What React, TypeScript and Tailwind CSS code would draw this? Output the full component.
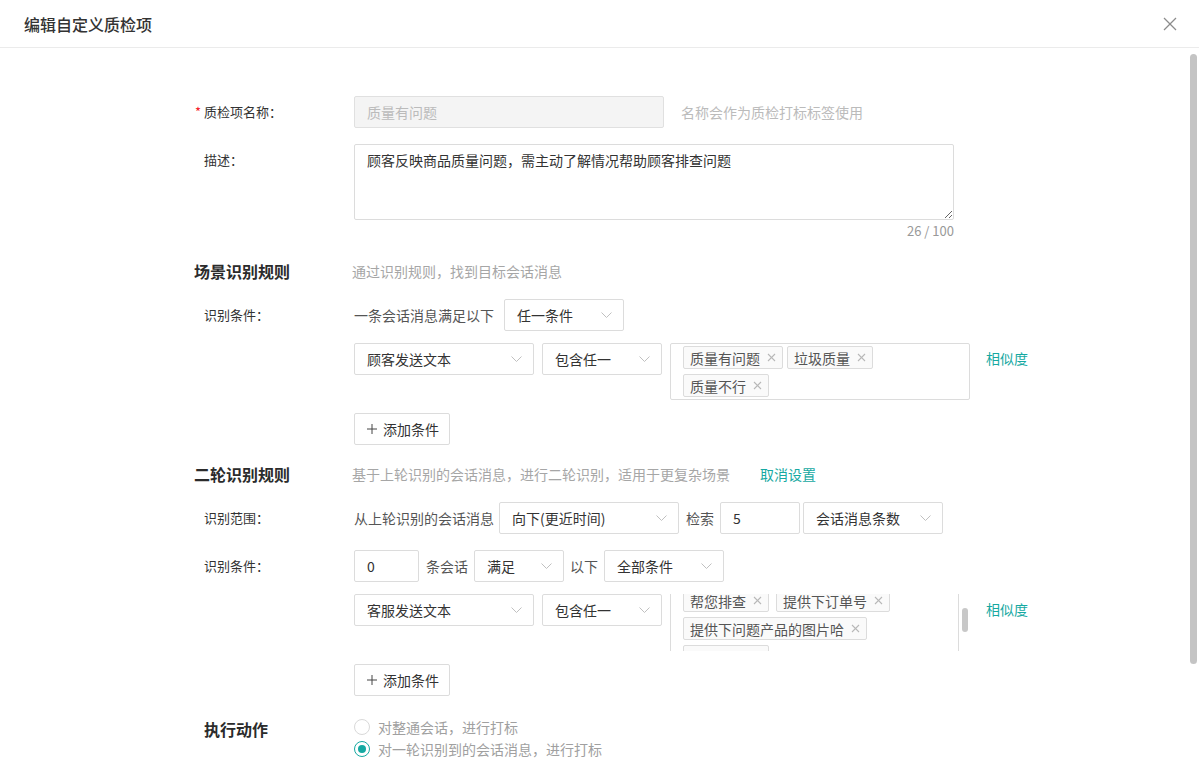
import React from "react"

const TEAL = "text-[#16a9a2]"

function Chevron() {
  return (
    <svg width="11" height="6" viewBox="0 0 11 6" fill="none" className="shrink-0">
      <polyline points="0.5,0.5 5.5,5.5 10.5,0.5" stroke="#c0c0c0" strokeWidth="1" />
    </svg>
  )
}

function Select({ value, className }: { value: string; className: string }) {
  return (
    <div
      className={`flex h-8 shrink-0 items-center justify-between rounded-[2px] border border-[#dcdcdc] bg-white pl-3 pr-[11px] text-[14px] leading-[20px] text-[#333] ${className}`}
    >
      <span>{value}</span>
      <Chevron />
    </div>
  )
}

function Input({ value, className }: { value: string; className: string }) {
  return (
    <div
      className={`flex h-8 shrink-0 items-center rounded-[2px] border border-[#dcdcdc] bg-white px-3 text-[14px] leading-[20px] text-[#333] ${className}`}
    >
      {value}
    </div>
  )
}

function Tag({ text }: { text: string }) {
  return (
    <div className="flex h-[23px] shrink-0 items-center rounded-[2px] border border-[#dcdcdc] bg-[#fafafa] pl-[6px] pr-[6px] text-[14px] leading-[20px] text-[#555]">
      <span>{text}</span>
      <svg width="9" height="9" viewBox="0 0 9 9" className="ml-[7px]">
        <line x1="1" y1="1" x2="8" y2="8" stroke="#b8b8b8" strokeWidth="1.1" />
        <line x1="8" y1="1" x2="1" y2="8" stroke="#b8b8b8" strokeWidth="1.1" />
      </svg>
    </div>
  )
}

function Label({ children, required }: { children: React.ReactNode; required?: boolean }) {
  return (
    <div className="flex h-8 w-[160px] shrink-0 items-center pl-[10px] text-[13px] text-[#333]">
      {required && <span className="-ml-[9px] mr-[3px] text-[#f5222d]">*</span>}
      {children}
    </div>
  )
}

function SectionTitle({ title, hint, extra }: { title: string; hint: string; extra?: string }) {
  return (
    <div className="flex h-6 items-center">
      <div className="w-[158px] shrink-0 text-[16px] font-bold text-[#2b2b2b]">{title}</div>
      <span className="text-[14px] text-[#a6a6a6]">{hint}</span>
      {extra && <span className={`ml-[30px] text-[14px] ${TEAL}`}>{extra}</span>}
    </div>
  )
}

function AddButton() {
  return (
    <div className="ml-[160px] flex h-8 w-[96px] items-center rounded-[2px] border border-[#dcdcdc] bg-white pl-3 text-[14px] text-[#333]">
      <svg width="10" height="10" viewBox="0 0 10 10" className="mr-[6px]">
        <line x1="5" y1="0" x2="5" y2="10" stroke="#444" strokeWidth="1" />
        <line x1="0" y1="5" x2="10" y2="5" stroke="#444" strokeWidth="1" />
      </svg>
      添加条件
    </div>
  )
}

export default function App() {
  return (
    <div className="relative h-[777px] w-full overflow-hidden bg-white font-['Noto_Sans_CJK_SC','Noto_Sans',sans-serif]">
      <header className="flex h-[48px] items-center justify-between border-b border-[#ebebeb] pl-6 pr-[22px]">
        <h1 className="text-[16px] font-medium text-[#333]">编辑自定义质检项</h1>
        <svg width="14" height="14" viewBox="0 0 14 14">
          <line x1="1" y1="1" x2="13" y2="13" stroke="#8c8c8c" strokeWidth="1.2" />
          <line x1="13" y1="1" x2="1" y2="13" stroke="#8c8c8c" strokeWidth="1.2" />
        </svg>
      </header>

      <div className="px-6 pt-6">
        <div className="pl-[170px] pt-6">
          {/* 基本信息 */}
          <div className="flex h-8 items-center">
            <Label required>质检项名称：</Label>
            <div className="flex h-8 w-[310px] items-center rounded-[2px] border border-[#e0e0e0] bg-[#f4f4f4] px-3 text-[14px] text-[#bbb]">
              质量有问题
            </div>
            <span className="ml-[17px] text-[14px] text-[#bbb]">名称会作为质检打标标签使用</span>
          </div>

          <div className="mt-4 flex items-start">
            <div className="mt-[6px] w-[160px] shrink-0 pl-[10px] text-[13px] leading-[20px] text-[#333]">描述：</div>
            <textarea
              readOnly
              defaultValue="顾客反映商品质量问题，需主动了解情况帮助顾客排查问题"
              className="h-[76px] w-[600px] resize-y rounded-[2px] border border-[#dcdcdc] px-3 py-[5px] text-[14px] leading-[20px] text-[#333] outline-none"
            />
          </div>
          <div className="ml-[160px] w-[600px] text-right text-[13px] leading-[22px] text-[#999]">26 / 100</div>

          {/* 场景识别规则 */}
          <div className="mt-[17px]">
            <SectionTitle title="场景识别规则" hint="通过识别规则，找到目标会话消息" />
          </div>

          <div className="mt-4 flex h-8 items-center">
            <Label>识别条件：</Label>
            <span className="text-[14px] text-[#555]">一条会话消息满足以下</span>
            <Select value="任一条件" className="ml-[10px] w-[120px]" />
          </div>

          <div className="mt-3 flex items-start">
            <div className="w-[160px] shrink-0" />
            <Select value="顾客发送文本" className="w-[180px]" />
            <Select value="包含任一" className="ml-[8px] w-[120px]" />
            <div className="ml-[8px] flex h-[57px] w-[300px] shrink-0 flex-col gap-[5px] rounded-[2px] border border-[#dcdcdc] pl-3 pt-[2px]">
              <div className="flex gap-[4px]">
                <Tag text="质量有问题" />
                <Tag text="垃圾质量" />
              </div>
              <div className="flex gap-[4px]">
                <Tag text="质量不行" />
              </div>
            </div>
            <span className={`ml-[16px] text-[14px] leading-[30px] ${TEAL}`}>相似度</span>
          </div>

          <div className="mt-[13px]">
            <AddButton />
          </div>

          {/* 二轮识别规则 */}
          <div className="mt-[17px]">
            <SectionTitle
              title="二轮识别规则"
              hint="基于上轮识别的会话消息，进行二轮识别，适用于更复杂场景"
              extra="取消设置"
            />
          </div>

          <div className="mt-4 flex h-8 items-center">
            <Label>识别范围：</Label>
            <span className="text-[14px] text-[#555]">从上轮识别的会话消息</span>
            <Select value="向下(更近时间)" className="ml-[5px] w-[180px]" />
            <span className="ml-[7px] text-[14px] text-[#555]">检索</span>
            <Input value="5" className="ml-[6px] w-[80px]" />
            <Select value="会话消息条数" className="ml-[3px] w-[140px]" />
          </div>

          <div className="mt-4 flex h-8 items-center">
            <Label>识别条件：</Label>
            <Input value="0" className="w-[65px]" />
            <span className="ml-[7px] text-[14px] text-[#555]">条会话</span>
            <Select value="满足" className="ml-[6px] w-[90px]" />
            <span className="ml-[6px] text-[14px] text-[#555]">以下</span>
            <Select value="全部条件" className="ml-[6px] w-[120px]" />
          </div>

          <div className="mt-3 flex items-start">
            <div className="w-[160px] shrink-0" />
            <Select value="客服发送文本" className="w-[180px]" />
            <Select value="包含任一" className="ml-[8px] w-[120px]" />
            <div className="ml-[8px] flex h-[57px] w-[300px] shrink-0 items-start">
              <div className="h-[57px] w-[289px] shrink-0 overflow-hidden border-x border-[#dcdcdc]">
                <div className="-mt-[5px] flex flex-col gap-[5px] pl-3">
                  <div className="flex gap-[7px]">
                    <Tag text="帮您排查" />
                    <Tag text="提供下订单号" />
                  </div>
                  <div className="flex">
                    <Tag text="提供下问题产品的图片哈" />
                  </div>
                  <div className="flex">
                    <Tag text="稍等一下" />
                  </div>
                </div>
              </div>
              <div className="ml-[3px] mt-[14px] h-[24px] w-[6px] rounded-full bg-[#c8c8c8]" />
            </div>
            <span className={`ml-[16px] text-[14px] leading-[30px] ${TEAL}`}>相似度</span>
          </div>

          <div className="mt-[13px]">
            <AddButton />
          </div>

          {/* 执行动作 */}
          <div className="mt-[20px] flex items-start">
            <div className="mt-[2px] w-[160px] shrink-0 pl-[10px] text-[16px] font-bold leading-[22px] text-[#2b2b2b]">执行动作</div>
            <div className="flex flex-col">
              <div className="flex h-[22px] items-center">
                <span className="h-4 w-4 rounded-full border border-[#d9d9d9] bg-white" />
                <span className="ml-2 text-[14px] text-[#a0a0a0]">对整通会话，进行打标</span>
              </div>
              <div className="flex h-[22px] items-center">
                <span className="flex h-4 w-4 items-center justify-center rounded-full border border-[#16a9a2] bg-white">
                  <span className="h-2 w-2 rounded-full bg-[#16a9a2]" />
                </span>
                <span className="ml-2 text-[14px] text-[#a0a0a0]">对一轮识别到的会话消息，进行打标</span>
              </div>
            </div>
          </div>
        </div>
      </div>

      <div className="absolute left-[1190px] top-[54px] h-[610px] w-[7px] rounded-full bg-[#c4c4c4]" />
    </div>
  )
}
